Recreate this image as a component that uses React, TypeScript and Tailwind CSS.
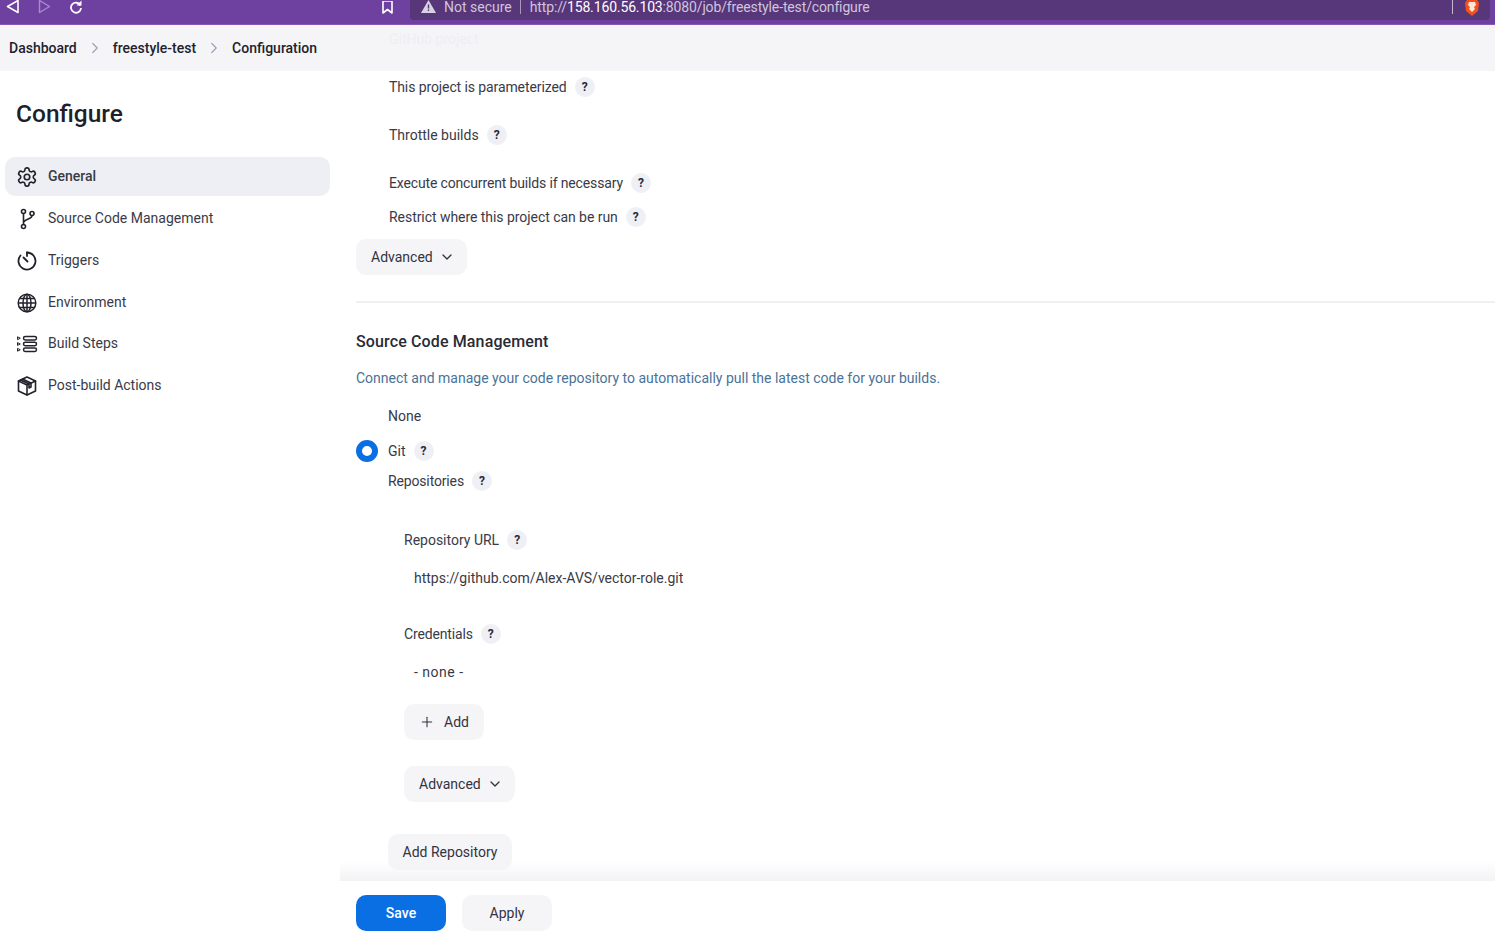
import { ChevronDown, ChevronRight, Plus } from 'lucide-react'

const font = { fontFamily: 'Roboto, "Noto Sans", sans-serif' }

function Help() {
  return (
    <span className="ml-2 flex h-5 w-5 items-center justify-center rounded-full bg-[#eef0f5] text-[12px] font-bold leading-none text-[#2a2a35]">?</span>
  )
}

function Row({ label, className }: { label: string, className: string }) {
  return (
    <div className={`flex h-6 items-center ${className}`}>
      <span>{label}</span>
      <Help />
    </div>
  )
}

function Btn({ children, className }: { children: any, className: string }) {
  return (
    <button className={`flex h-9 items-center rounded-[10px] bg-[#f5f5f8] text-[14px] text-[#33333f] ${className}`}>{children}</button>
  )
}

function GearIcon() {
  return (
    <svg width="22" height="22" viewBox="0 0 24 24" fill="none" stroke="currentColor" strokeWidth="1.8" strokeLinecap="round" strokeLinejoin="round">
      <path d="M12.22 2h-.44a2 2 0 0 0-2 2v.18a2 2 0 0 1-1 1.73l-.43.25a2 2 0 0 1-2 0l-.15-.08a2 2 0 0 0-2.73.73l-.22.38a2 2 0 0 0 .73 2.73l.15.1a2 2 0 0 1 1 1.72v.51a2 2 0 0 1-1 1.74l-.15.09a2 2 0 0 0-.73 2.73l.22.38a2 2 0 0 0 2.73.73l.15-.08a2 2 0 0 1 2 0l.43.25a2 2 0 0 1 1 1.73V20a2 2 0 0 0 2 2h.44a2 2 0 0 0 2-2v-.18a2 2 0 0 1 1-1.73l.43-.25a2 2 0 0 1 2 0l.15.08a2 2 0 0 0 2.73-.73l.22-.39a2 2 0 0 0-.73-2.73l-.15-.08a2 2 0 0 1-1-1.74v-.5a2 2 0 0 1 1-1.74l.15-.09a2 2 0 0 0 .73-2.73l-.22-.38a2 2 0 0 0-2.73-.73l-.15.08a2 2 0 0 1-2 0l-.43-.25a2 2 0 0 1-1-1.73V4a2 2 0 0 0-2-2z" />
      <circle cx="12" cy="12" r="3" />
    </svg>
  )
}

function BranchIcon() {
  return (
    <svg width="22" height="22" viewBox="0 0 22 22" fill="none" stroke="currentColor" strokeWidth="1.6" strokeLinecap="round">
      <circle cx="7.5" cy="3.5" r="2" />
      <circle cx="7.5" cy="18.5" r="2" />
      <circle cx="16" cy="5.5" r="2" />
      <path d="M7.5 5.5v11M16 7.5c0 4-8.5 3.5-8.5 7.5" />
    </svg>
  )
}

function TimerIcon() {
  return (
    <svg width="22" height="22" viewBox="0 0 22 22" fill="none" stroke="currentColor" strokeWidth="1.8" strokeLinecap="round">
      <path d="M11 2.5a8.5 8.5 0 1 1-6.5 3" />
      <path d="M11 2.5v3.5M7.5 7.5l4 4" />
    </svg>
  )
}

function GlobeIcon() {
  return (
    <svg width="22" height="22" viewBox="0 0 22 22" fill="none" stroke="currentColor" strokeWidth="1.5">
      <circle cx="11" cy="11" r="8.8" />
      <ellipse cx="11" cy="11" rx="4" ry="8.8" />
      <path d="M11 2.2v17.6M2.2 11h17.6M3.6 6.5h14.8M3.6 15.5h14.8" />
    </svg>
  )
}

function StepsIcon() {
  return (
    <svg width="22" height="22" viewBox="0 0 22 22" fill="none" stroke="currentColor" strokeLinejoin="round">
      <rect x="7.5" y="3.5" width="13" height="3.4" rx="1.7" strokeWidth="1.5" />
      <rect x="7.5" y="9.3" width="13" height="3.4" rx="1.7" strokeWidth="1.5" />
      <rect x="7.5" y="15.1" width="13" height="3.4" rx="1.7" strokeWidth="1.5" />
      <path d="M1.5 3.8l2.8 1.4-2.8 1.4zM1.5 9.6l2.8 1.4-2.8 1.4zM1.5 15.4l2.8 1.4-2.8 1.4z" strokeWidth="1" />
    </svg>
  )
}

function BoxIcon() {
  return (
    <svg width="22" height="22" viewBox="0 0 22 22" fill="none" stroke="currentColor" strokeWidth="1.6" strokeLinejoin="round" strokeLinecap="round">
      <path d="M11 2l8.5 4v10L11 20l-8.5-4V6z" />
      <path d="M2.5 6l8.5 4 8.5-4M11 10v10" />
      <path d="M6.5 4l8.5 4v4l-2 1V9L4.5 5" />
    </svg>
  )
}

const navItems = [
  { label: 'General', icon: <GearIcon />, active: true, mt: 'mt-[25px]' },
  { label: 'Source Code Management', icon: <BranchIcon />, mt: 'mt-[3px]' },
  { label: 'Triggers', icon: <TimerIcon />, mt: 'mt-[3px]' },
  { label: 'Environment', icon: <GlobeIcon />, mt: 'mt-[3px]' },
  { label: 'Build Steps', icon: <StepsIcon />, mt: 'mt-[2px]' },
  { label: 'Post-build Actions', icon: <BoxIcon />, mt: 'mt-[3px]' },
]

export default function App() {
  return (
    <div style={font} className="relative flex h-[944px] w-full flex-col overflow-hidden bg-white text-[14px] text-[#3a3a47]">
      {/* browser chrome, cut off at the top */}
      <div className="flex h-[25px] shrink-0 items-start border-b border-[#8657b5] bg-[#6e41a0] text-white">
        <div className="flex h-[14px] w-[410px] shrink-0 items-center">
          <svg className="ml-[6px]" width="13" height="14" viewBox="0 0 13 14" fill="none" stroke="white" strokeWidth="1.6" strokeLinejoin="round">
            <path d="M12 0.5v12L1.5 6.5z" />
          </svg>
          <svg className="ml-[19px]" width="13" height="14" viewBox="0 0 13 14" fill="none" stroke="#a98bc9" strokeWidth="1.4" strokeLinejoin="round">
            <path d="M1.5 0.5v12L11.5 6.5z" />
          </svg>
          <svg className="ml-[18px]" width="14" height="14" viewBox="0 0 14 14" fill="none" stroke="white" strokeWidth="1.8">
            <path d="M11.5 5.5A5 5 0 1 0 12 8" />
            <path d="M12.5 0.5v5h-5z" fill="white" stroke="none" />
          </svg>
          <svg className="ml-[299px]" width="11" height="13" viewBox="0 0 11 13" fill="none" stroke="white" strokeWidth="1.6" strokeLinejoin="round">
            <path d="M1 0h9v12L5.5 8.5 1 12z" />
          </svg>
        </div>
        <div className="flex h-5 flex-1 items-start rounded-b-[4px] bg-[#573679] pr-[10px] mr-[5px]">
          <svg className="ml-[11px]" width="15" height="13" viewBox="0 0 15 13">
            <path d="M7.5 0L15 13H0z" fill="#d9d2e3" />
            <rect x="6.8" y="4.5" width="1.4" height="4" fill="#573679" />
            <rect x="6.8" y="9.5" width="1.4" height="1.5" fill="#573679" />
          </svg>
          <span className="ml-2 text-[14px] leading-[14px] text-[#cfc5dc]">Not secure</span>
          <span className="ml-2 h-[14px] w-px bg-[#a898bb]" />
          <span className="ml-[9px] text-[14px] leading-[14px] tracking-[-0.14px] text-[#cfc5dc]">http://<span className="text-white">158.160.56.103</span>:8080/job/freestyle-test/configure</span>
          <span className="ml-auto h-[14px] w-px bg-[#c2b8cf]" />
          <svg className="ml-[11px]" width="16" height="16" viewBox="0 0 16 16">
            <path d="M3 0h10l2 3-1 8-6 5-6-5-1-8z" fill="#f1511b" />
            <path d="M5 2h6l1 3-2 2 1 2-3 3-3-3 1-2-2-2z" fill="#fde3da" />
          </svg>
        </div>
      </div>

      {/* breadcrumb */}
      <div className="relative flex h-[46px] shrink-0 items-center bg-[#f5f5f8] pl-[9px] font-medium text-[#22222c]">
        <span>Dashboard</span>
        <ChevronRight className="mx-[9px] h-[18px] w-[18px] text-[#98a3bb]" strokeWidth={1.6} />
        <span>freestyle-test</span>
        <ChevronRight className="mx-[9px] h-[18px] w-[18px] text-[#98a3bb]" strokeWidth={1.6} />
        <span>Configuration</span>
        <span className="absolute left-[389px] top-[4px] font-normal text-[#eeeff2]">GitHub project</span>
      </div>

      <div className="flex min-h-0 flex-1">
        {/* sidebar */}
        <aside className="w-[340px] shrink-0 pl-[5px] pr-[10px]">
          <h1 className="ml-[11px] mt-[25px] text-[24.5px] font-medium leading-[36px] text-[#1f1f29]">Configure</h1>
          {navItems.map((item) => (
            <div key={item.label} className={`flex h-[39px] items-center rounded-[10px] pl-[11px] ${item.mt} ${item.active ? 'bg-[#eeeff4]' : ''}`}>
              <span className="flex w-[32px] shrink-0 text-[#22222c]">{item.icon}</span>
              <span className={item.active ? 'font-medium' : ''}>{item.label}</span>
            </div>
          ))}
        </aside>

        {/* form */}
        <main className="min-w-0 flex-1 pl-[16px]">
          <div className="pl-[33px]">
            <Row label="This project is parameterized" className="mt-1 tracking-[-0.1px]" />
            <Row label="Throttle builds" className="mt-6" />
            <Row label="Execute concurrent builds if necessary" className="mt-6 tracking-[-0.15px]" />
            <Row label="Restrict where this project can be run" className="mt-[10px] tracking-[-0.05px]" />
          </div>
          <Btn className="mt-[10px] pl-[15px] pr-[12px]">Advanced<ChevronDown className="ml-1.5 h-4 w-4" strokeWidth={2} /></Btn>
          <div className="mt-[26px] h-0.5 bg-[#f0f0f3]" />
          <h2 className="mt-[27px] text-[16px] font-medium leading-6 tracking-[0.13px] text-[#2a2a35]">Source Code Management</h2>
          <p className="mt-[12px] leading-6 text-[#4a7299]">Connect and manage your code repository to automatically pull the latest code for your builds.</p>
          <div className="mt-[14px] flex h-6 items-center pl-[32px]">None</div>
          <div className="mt-[11px] flex h-6 items-center">
            <span className="h-[22px] w-[22px] rounded-full border-[6px] border-[#0b6fe4] bg-white" />
            <span className="ml-2.5">Git</span>
            <Help />
          </div>
          <div className="pl-[32px]">
            <Row label="Repositories" className="mt-[6px] tracking-[-0.15px]" />
            <div className="pl-4">
              <Row label="Repository URL" className="mt-[35px]" />
              <div className="mt-[14px] h-6 pl-[10px] leading-6">https://github.com/Alex-AVS/vector-role.git</div>
              <Row label="Credentials" className="mt-[32px] tracking-[-0.15px]" />
              <div className="mt-[14px] h-6 pl-[10px] leading-6 tracking-[0.5px]">- none -</div>
              <Btn className="mt-5 w-20 justify-center"><Plus className="mr-[9px] h-4 w-4" strokeWidth={1.6} />Add</Btn>
              <Btn className="mt-[26px] pl-[15px] pr-[12px]">Advanced<ChevronDown className="ml-1.5 h-4 w-4" strokeWidth={2} /></Btn>
            </div>
            <Btn className="mt-8 w-[124px] justify-center">Add Repository</Btn>
          </div>
        </main>
      </div>

      {/* sticky save bar */}
      <div className="absolute bottom-0 left-[340px] right-0 h-[63px] bg-white pl-[16px] pt-[14px]">
        <div className="absolute -top-5 left-0 right-0 h-5 bg-gradient-to-b from-transparent to-[#f3f3f6]" />
        <div className="flex gap-4">
          <button className="flex h-9 w-[90px] items-center justify-center rounded-[10px] bg-[#0b6fe4] font-medium text-white">Save</button>
          <button className="flex h-9 w-[90px] items-center justify-center rounded-[10px] bg-[#f5f5f8] text-[#33333f]">Apply</button>
        </div>
      </div>
    </div>
  )
}
